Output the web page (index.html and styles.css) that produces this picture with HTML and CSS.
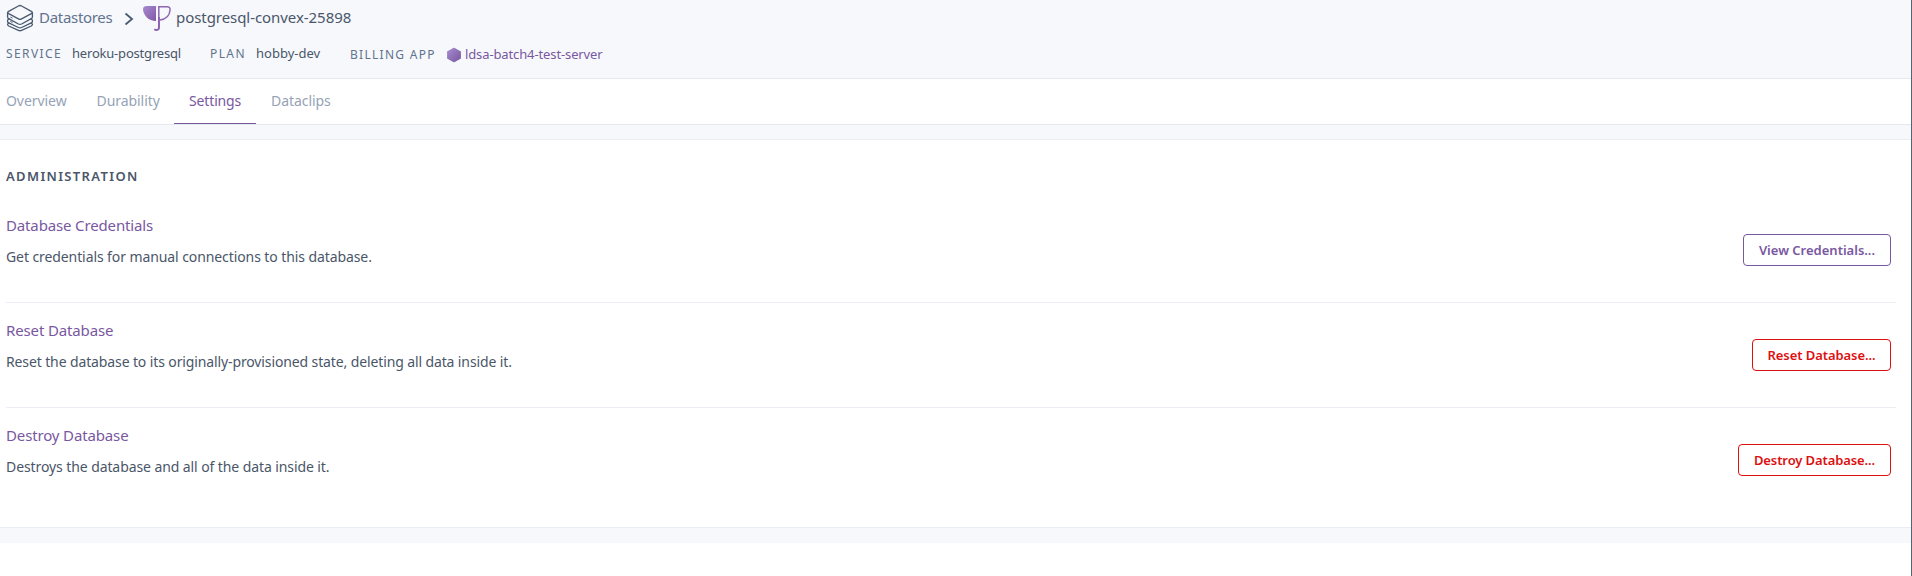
FILE: index.html
```
<!DOCTYPE html>
<html lang="en">
<head>
<meta charset="utf-8">
<title>postgresql-convex-25898 | Heroku Data</title>
<link rel="stylesheet" href="styles.css">
</head>
<body>
<div class="page">
  <header class="header">
    <nav class="crumbs">
      <svg class="icon-stores" width="28" height="28" viewBox="0 0 28 28">
        <g fill="none" stroke="#4a5a70" stroke-width="1.35" stroke-linejoin="round" stroke-linecap="round">
          <path d="M12.4 2 Q14 1.1 15.6 2 L25.3 7.3 Q27.3 8.4 25.3 9.6 L15.6 14.9 Q14 15.8 12.4 14.9 L2.7 9.6 Q.7 8.4 2.7 7.3Z"/>
          <path d="M1.6 9v4.2Q1.6 14 2.7 14.6L12.4 20Q14 20.8 15.6 20L25.3 14.6Q26.4 14 26.4 13.2V9"/>
          <path d="M3 14.8Q1.6 15.4 1.6 16.4V17.4Q1.6 18.3 2.7 18.9L12.4 23.5Q14 24.3 15.6 23.5L25.3 18.9Q26.4 18.3 26.4 17.4V16.4Q26.4 15.4 25 14.8"/>
          <path d="M3 19.2Q1.6 19.6 1.6 20.6Q1.6 21.4 2.7 22L12.4 26.4Q14 27.2 15.6 26.4L25.3 22Q26.4 21.4 26.4 20.6Q26.4 19.6 25 19.2"/>
          <path d="M4.7 13.2l1.5.8M4.7 17.6l1.5.8" stroke-width="1"/>
        </g>
      </svg>
      <a class="crumb-link">Datastores</a>
      <svg class="icon-chevron" width="10" height="14" viewBox="0 0 10 14"><path d="M1.5 1.5L8 7L1.5 12.5" fill="none" stroke="#4a5a70" stroke-width="1.8"/></svg>
      <svg class="icon-postgres" width="30" height="28" viewBox="0 0 30 28">
        <defs><linearGradient id="pg" x1="0" y1="0" x2="1" y2="1"><stop offset="0" stop-color="#a78bd0"/><stop offset="1" stop-color="#8258a6"/></linearGradient></defs>
        <path d="M4.500 2H14V17C10.500 16.800 7 15.800 4.600 13.200C2.300 10.800 1.100 7.800 1 5.200C1 3.200 2.400 2 4.500 2Z" fill="url(#pg)"/>
        <path d="M16.800 24V2.700H25Q28.300 2.700 28.100 5.800C27.600 11.600 24.500 15.300 18 15.900" fill="none" stroke="#8e67b5" stroke-width="1.500"/>
        <path d="M17 13V23.600Q17 26 14.700 26Q13.300 26 12.300 25.200" fill="none" stroke="#8a61b0" stroke-width="1.800"/>
      </svg>
      <span class="crumb-current">postgresql-convex-25898</span>
    </nav>
    <dl class="meta">
      <div class="meta-item service"><dt>SERVICE</dt><dd>heroku-postgresql</dd></div>
      <div class="meta-item plan"><dt>PLAN</dt><dd>hobby-dev</dd></div>
      <div class="meta-item billing"><dt>BILLING APP</dt><dd>
        <svg class="icon-app" width="16" height="16" viewBox="0 0 16 16">
          <defs><linearGradient id="hex" x1="0" y1="0" x2="1" y2="1"><stop offset="0" stop-color="#a78bd0"/><stop offset="1" stop-color="#79589f"/></linearGradient></defs>
          <path d="M8 1.300L14.300 4.700V11.300L8 14.700L1.700 11.300V4.700Z" fill="url(#hex)" stroke="url(#hex)" stroke-width="1.200" stroke-linejoin="round"/>
        </svg><a>ldsa-batch4-test-server</a></dd></div>
    </dl>
  </header>
  <nav class="tabs">
    <a class="tab">Overview</a>
    <a class="tab">Durability</a>
    <a class="tab active">Settings</a>
    <a class="tab">Dataclips</a>
  </nav>
  <main class="panel">
    <h2 class="panel-title">ADMINISTRATION</h2>
    <section class="row">
      <div class="row-text"><h3>Database Credentials</h3><p>Get credentials for manual connections to this database.</p></div>
      <button class="btn view">View Credentials...</button>
    </section>
    <section class="row">
      <div class="row-text"><h3>Reset Database</h3><p class="long">Reset the database to its originally-provisioned state, deleting all data inside it.</p></div>
      <button class="btn danger reset">Reset Database...</button>
    </section>
    <section class="row">
      <div class="row-text"><h3>Destroy Database</h3><p>Destroys the database and all of the data inside it.</p></div>
      <button class="btn danger destroy">Destroy Database...</button>
    </section>
  </main>
  <footer class="after"></footer>
</div>
</body>
</html>
```
FILE: styles.css
```
* { box-sizing: border-box; margin: 0; padding: 0; }
body { font-family: "Noto Sans", sans-serif; font-size: 14px; line-height: 20px; color: #4a5669; background: #fff; }
.page { height: 576px; display: flex; flex-direction: column; background: #f6f8fc; border-right: 1px solid #56646f; overflow: hidden; }

.header { height: 79px; padding: 4px 6px 0; border-bottom: 1px solid #e5e9f2; }
.crumbs { display: flex; align-items: center; height: 28px; font-size: 15px; }
.crumb-link { width: 73px; margin: 0 0 2px 5px; color: #62738d; letter-spacing: -.3px; }
.icon-chevron { margin: 1px 0 0 12px; }
.icon-postgres { margin-left: 8px; }
.crumb-current { margin: 0 0 2px 4px; letter-spacing: -.06px; }

.meta { display: flex; margin-top: 11px; font-size: 13px; }
.meta-item { display: flex; white-space: nowrap; }
.meta dt { padding-top: 1px; font-size: 12px; letter-spacing: 1.4px; color: #62738d; }
.meta dd { display: flex; }
.service { width: 204px; }
.service dt { width: 66px; }
.service dd { letter-spacing: -.2px; }
.plan { width: 140px; }
.plan dt { width: 46px; }
.billing { padding-top: 1px; }
.billing dt { width: 96px; letter-spacing: 1.28px; }
.billing a { margin-left: 3px; color: #79589f; letter-spacing: -.12px; }
.icon-app { margin: 3px 0 0; width: 16px; }

.tabs { display: flex; flex: none; height: 46px; padding-left: 6px; background: #fff; border-bottom: 1px solid #e3e8f1; }
.tab { height: 45px; padding: 12px 15px 0; color: #96a3b6; letter-spacing: -.06px; }
.tab:first-child { padding-left: 0; width: 75.5px; }
.tab:nth-child(2) { width: 92.5px; }
.active { width: 82px; color: #79589f; border-bottom: 1px solid #79589f; letter-spacing: -.14px; }

.panel { flex: none; height: 389px; margin-top: 14px; padding: 26px 15px 0 6px; background: #fff; border: solid #e9edf4; border-width: 1px 0; }
.panel-title { margin-bottom: 12px; font-size: 13px; line-height: 20px; font-weight: 600; letter-spacing: 1.35px; }
.row { display: flex; justify-content: space-between; align-items: flex-start; height: 105px; padding: 17px 5px 0 0; border-bottom: 1px solid #eceef5; }
.row:last-child { border-bottom-color: transparent; }
.row h3 { margin-bottom: 12px; font-size: 15px; font-weight: 400; color: #79589f; letter-spacing: -.14px; }
.row p { letter-spacing: -.09px; }
.row .long { letter-spacing: -.12px; }

.btn { height: 32px; width: 148px; margin-top: 19px; border: 1px solid #79589f; border-radius: 4px; background: #fff; color: #79589f; font: 600 13px/20px "Noto Sans", sans-serif; white-space: nowrap; }
.danger { border-color: #dc1010; color: #dc1010; }
.reset { width: 139px; letter-spacing: -.07px; }
.destroy { width: 153px; letter-spacing: -.1px; }

.after { flex: 1; margin-top: 15px; background: #fff; }
```
